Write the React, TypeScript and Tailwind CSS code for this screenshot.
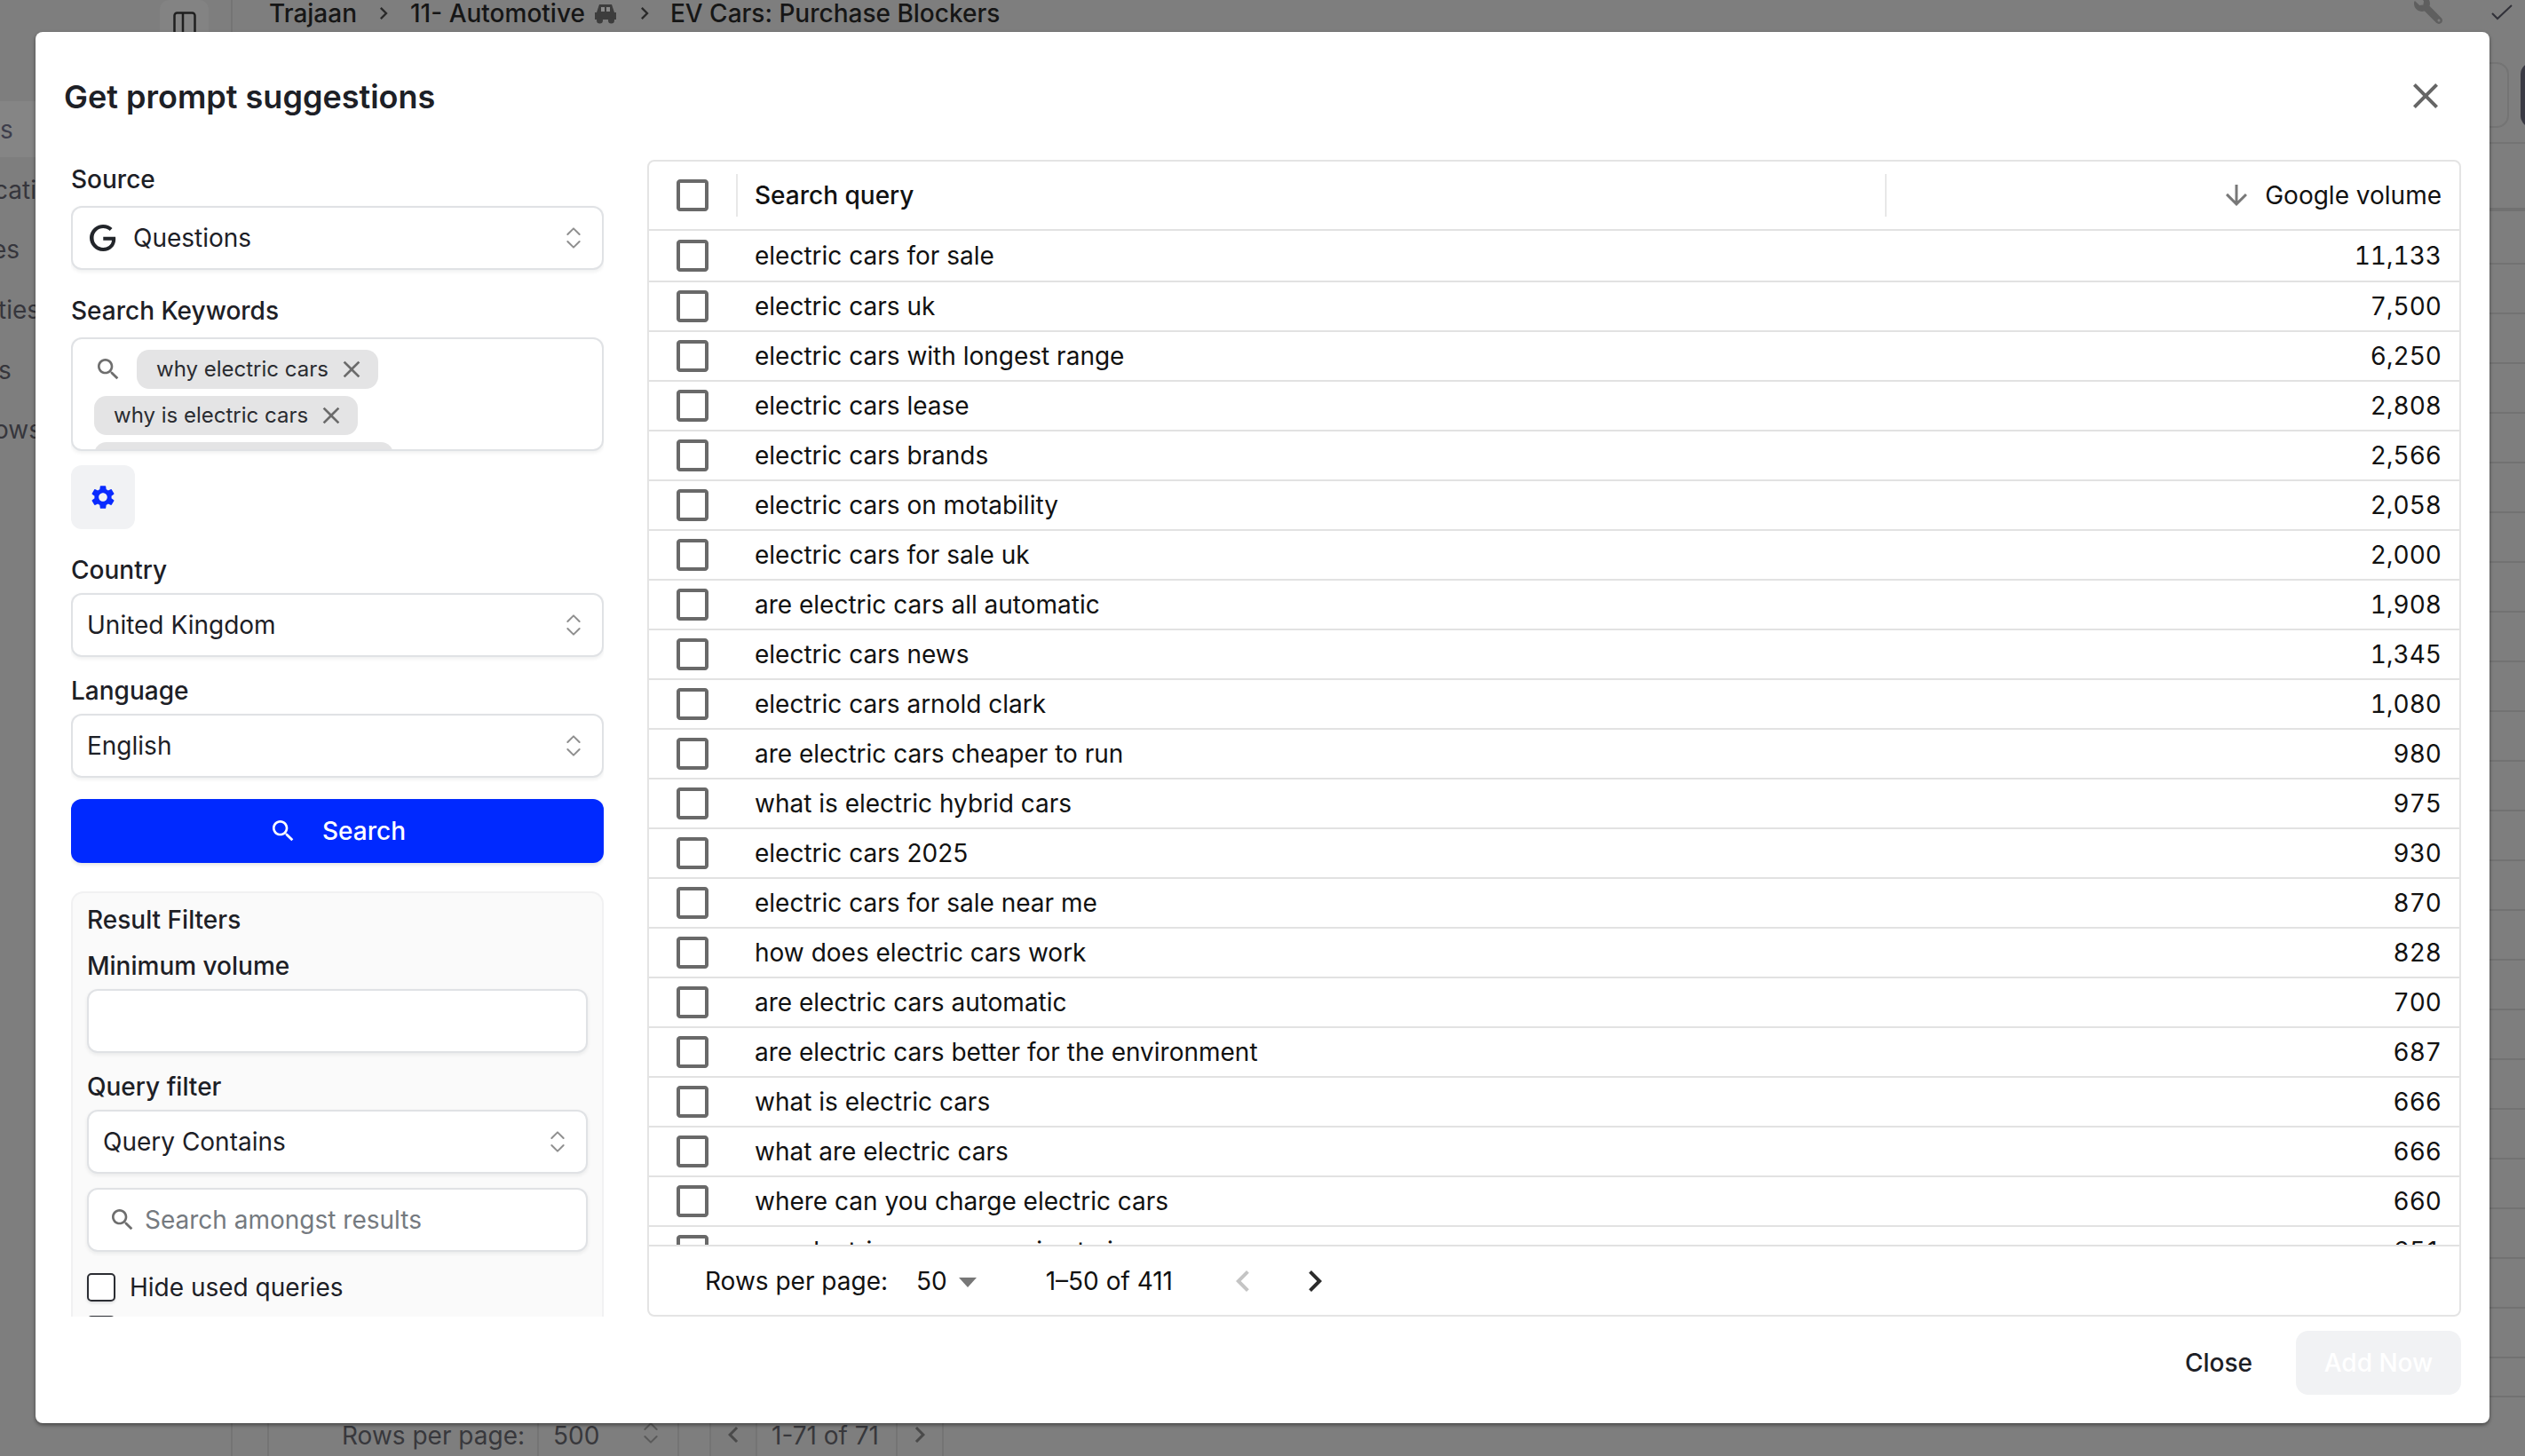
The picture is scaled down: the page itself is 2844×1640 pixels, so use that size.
import React from "react";
import { ChevronsUpDown } from "lucide-react";
import { FaWrench } from "react-icons/fa";

const P = {
  search:
    "M15.5 14h-.79l-.28-.27C15.41 12.59 16 11.11 16 9.5 16 5.91 13.09 3 9.5 3S3 5.91 3 9.5 5.91 16 9.5 16c1.61 0 3.09-.59 4.23-1.57l.27.28v.79l5 4.99L20.49 19l-4.99-5zm-6 0C7.01 14 5 11.99 5 9.5S7.01 5 9.5 5 14 7.01 14 9.5 11.99 14 9.5 14z",
  close:
    "M19 6.41 17.59 5 12 10.59 6.41 5 5 6.41 10.59 12 5 17.59 6.41 19 12 13.41 17.59 19 19 17.59 13.41 12z",
  box: "M19 5v14H5V5h14m0-2H5c-1.1 0-2 .9-2 2v14c0 1.1.9 2 2 2h14c1.1 0 2-.9 2-2V5c0-1.1-.9-2-2-2z",
  down: "M20 12l-1.41-1.41L13 16.17V4h-2v12.17l-5.58-5.59L4 12l8 8 8-8z",
  gear: "M19.14 12.94c.04-.3.06-.61.06-.94 0-.32-.02-.64-.07-.94l2.03-1.58c.18-.14.23-.41.12-.61l-1.92-3.32c-.12-.22-.37-.29-.59-.22l-2.39.96c-.5-.38-1.03-.7-1.62-.94l-.36-2.54c-.04-.24-.24-.41-.48-.41h-3.84c-.24 0-.43.17-.47.41l-.36 2.54c-.59.24-1.13.57-1.62.94l-2.39-.96c-.22-.08-.47 0-.59.22L2.74 8.87c-.12.21-.08.47.12.61l2.03 1.58c-.05.3-.09.63-.09.94s.02.64.07.94l-2.03 1.58c-.18.14-.23.41-.12.61l1.92 3.32c.12.22.37.29.59.22l2.39-.96c.5.38 1.03.7 1.62.94l.36 2.54c.05.24.24.41.48.41h3.84c.24 0 .44-.17.47-.41l.36-2.54c.59-.24 1.13-.56 1.62-.94l2.39.96c.22.08.47 0 .59-.22l1.92-3.32c.12-.22.07-.47-.12-.61l-2.01-1.58zM12 15.6c-1.98 0-3.6-1.62-3.6-3.6s1.62-3.6 3.6-3.6 3.6 1.62 3.6 3.6-1.62 3.6-3.6 3.6z",
  google:
    "M21.35 11.1h-9.17v2.73h6.51c-.33 3.81-3.5 5.44-6.5 5.44C8.36 19.27 5 16.25 5 12c0-4.1 3.2-7.27 7.2-7.27 3.09 0 4.9 1.97 4.9 1.97L19 4.72S16.56 2 12.1 2C6.42 2 2 6.8 2 12c0 5.05 4.13 10 10.22 10 5.35 0 9.25-3.67 9.25-9.09 0-1.15-.12-1.81-.12-1.81z",
  left: "M15.41 7.41 14 6l-6 6 6 6 1.41-1.41L10.83 12z",
  right: "M10 6 8.59 7.41 13.17 12l-4.58 4.59L10 18l6-6z",
};

function Ic({ d, className }: { d: string; className: string }) {
  return (
    <svg viewBox="0 0 24 24" fill="currentColor" className={className}>
      <path d={d} />
    </svg>
  );
}

const rows: [string, string][] = [
  ["electric cars for sale", "11,133"],
  ["electric cars uk", "7,500"],
  ["electric cars with longest range", "6,250"],
  ["electric cars lease", "2,808"],
  ["electric cars brands", "2,566"],
  ["electric cars on motability", "2,058"],
  ["electric cars for sale uk", "2,000"],
  ["are electric cars all automatic", "1,908"],
  ["electric cars news", "1,345"],
  ["electric cars arnold clark", "1,080"],
  ["are electric cars cheaper to run", "980"],
  ["what is electric hybrid cars", "975"],
  ["electric cars 2025", "930"],
  ["electric cars for sale near me", "870"],
  ["how does electric cars work", "828"],
  ["are electric cars automatic", "700"],
  ["are electric cars better for the environment", "687"],
  ["what is electric cars", "666"],
  ["what are electric cars", "666"],
  ["where can you charge electric cars", "660"],
  ["are electric cars expensive to insure", "651"],
];

const fieldCls =
  "flex items-center shrink-0 h-[72px] bg-white border-2 border-[#e0e2e5] rounded-[12px] shadow-[0_2px_4px_rgba(20,25,35,0.07)]";

function Select({ label, icon }: { label: string; icon?: React.ReactNode }) {
  return (
    <div className={`${fieldCls} pl-[16px] pr-[16px]`}>
      {icon}
      <span className="flex-1 text-[28px] text-[#1d2026]">{label}</span>
      <ChevronsUpDown className="w-[32px] h-[32px] text-[#8f8f8f]" strokeWidth={1.5} />
    </div>
  );
}

function Label({ children }: { children: React.ReactNode }) {
  return (
    <div className="h-[44px] shrink-0 flex items-center text-[28px] font-medium text-[#1d2026] mb-[4px]">
      {children}
    </div>
  );
}

function Chip({ text }: { text: string }) {
  return (
    <div className="h-[44px] flex items-center bg-[#e4e4e5] rounded-[14px] pl-[22px] pr-[14px] gap-[10px] text-[24px] text-[#2a2c31] whitespace-nowrap">
      {text}
      <Ic d={P.close} className="w-[32px] h-[32px] text-[#6b6b6b]" />
    </div>
  );
}

function Background() {
  return (
    <div className="flex h-full text-[#36363c]">
      <aside className="w-[262px] shrink-0 border-r-2 border-[#747474] text-[28px] overflow-hidden">
        <div className="h-[114px] flex justify-end pr-[25px]">
          <div className="w-[55px] h-[60px] rounded-[10px] bg-[#838383] flex justify-center pt-[13px]">
            <svg viewBox="0 0 26 36" className="w-[26px] h-[36px]" fill="none" stroke="#1f1f1f" strokeWidth="2.5">
              <rect x="1.5" y="1.5" width="23" height="33" rx="3" />
              <path d="M11 2v32" />
            </svg>
          </div>
        </div>
        <div className="h-[63px] bg-[#858585] flex items-center text-[#3e3e4c]">s</div>
        <div className="h-[67px] flex items-center -ml-[7px] pt-[6px]">cati</div>
        <div className="h-[68px] flex items-center -ml-[9px] pt-[6px]">es</div>
        <div className="h-[68px] flex items-center -ml-[2px] pt-[6px]">ties</div>
        <div className="h-[67px] flex items-center -ml-[2px] pt-[6px]">s</div>
        <div className="h-[68px] flex items-center -ml-[7px] pt-[6px]">ows</div>
      </aside>
      <main className="flex-1 flex flex-col min-w-0 overflow-hidden">
        <div className="h-[70px] shrink-0 flex items-start text-[28px] font-medium text-[#161616] pl-[41px] pr-[14px]">
          <div className="h-[30px] flex items-center whitespace-nowrap">
            Trajaan
            <Ic d={P.right} className="w-[28px] h-[28px] mx-[16px] text-[#2a2a2a]" />
            11- Automotive
            <svg viewBox="0 0 28 24" className="w-[30px] h-[24px] ml-[8px]" fill="#3d3d3d">
              <path d="M7 2h14l3 9h2v8H2v-8h2z" />
              <rect x="9" y="5" width="4" height="5" fill="#8a8a8a" />
              <rect x="15" y="5" width="4" height="5" fill="#8a8a8a" />
              <circle cx="7.5" cy="20" r="3.5" />
              <circle cx="20.5" cy="20" r="3.5" />
            </svg>
            <Ic d={P.right} className="w-[28px] h-[28px] ml-[15px] mr-[15px] text-[#2a2a2a]" />
            EV Cars: Purchase Blockers
          </div>
          <div className="flex-1" />
          <FaWrench className="w-[32px] h-[32px] -mt-[5px] mr-[55px] -scale-x-100 text-[#5f5f5f]" />
          <svg viewBox="0 0 24 18" className="w-[24px] h-[18px] mt-[5px]" fill="none" stroke="#303038" strokeWidth="2">
            <path d="M1 10l6 6L23 1" />
          </svg>
        </div>
        <div className="h-[92px] shrink-0 border-b-2 border-[#747474] flex justify-end gap-[13px]">
          <div className="w-[120px] h-[74px] rounded-[14px] border-2 border-[#747474]" />
          <div className="w-[60px] h-[74px] rounded-[14px] bg-[#3a3a44] -mr-[55px]" />
        </div>
        <div className="h-[76px] shrink-0 border-b-[4px] border-[#717171]" />
        <div className="h-[60px] shrink-0 border-b-2 border-[#727272]" />
        {Array.from({ length: 22 }).map((_, i) => (
          <div key={i} className="h-[56px] shrink-0 border-b-2 border-[#727272]" />
        ))}
        <div className="h-[44px] shrink-0 border-b-2 border-[#727272]" />
        <div className="flex-1 flex items-stretch text-[28px] text-[#38383c]">
          <div className="w-[41px] border-r-2 border-[#747474]" />
          <span className="ml-[82px] w-[220px] pt-[22px]">Rows per page:</span>
          <div className="w-[160px] border-x-2 border-[#747474] flex items-start pt-[22px] pl-[16px]">
            <span className="flex-1">500</span>
            <ChevronsUpDown className="w-[32px] h-[32px] text-[#5a5a5a] mr-[14px] mt-[2px]" strokeWidth={1.5} />
          </div>
          <div className="ml-[34px] w-[54px] border-x-2 border-[#747474] flex justify-center pt-[24px] bg-[#7c7c7c]">
            <Ic d={P.left} className="w-[36px] h-[36px] text-[#4a4a4a]" />
          </div>
          <span className="ml-[16px] w-[140px] pt-[22px]">1-71 of 71</span>
          <div className="w-[54px] border-x-2 border-[#747474] flex justify-center pt-[24px]">
            <Ic d={P.right} className="w-[36px] h-[36px] text-[#4a4a4a]" />
          </div>
        </div>
      </main>
    </div>
  );
}

function Sidebar() {
  return (
    <div className="w-[600px] shrink-0 h-full overflow-hidden flex flex-col">
      <Label>Source</Label>
      <div className="mt-[4px] shrink-0">
        <Select
          label="Questions"
          icon={<Ic d={P.google} className="w-[36px] h-[36px] text-[#22252a] mr-[16px] shrink-0" />}
        />
      </div>
      <div className="mt-[24px]" />
      <Label>Search Keywords</Label>
      <div className="h-[128px] mt-[4px] shrink-0 overflow-hidden bg-white border-2 border-[#e0e2e5] rounded-[12px] shadow-[0_2px_4px_rgba(20,25,35,0.07)] pl-[24px] pr-[10px] pt-[12px]">
        <div className="flex flex-wrap gap-[8px]">
          <div className="h-[44px] flex items-center mr-[8px]">
            <Ic d={P.search} className="w-[32px] h-[32px] text-[#6e6e6e]" />
          </div>
          <Chip text="why electric cars" />
          <Chip text="why is electric cars" />
          <Chip text="why get an electric car" />
        </div>
      </div>
      <div className="mt-[16px] w-[72px] h-[72px] shrink-0 rounded-[12px] bg-[#f1f2f4] flex items-center justify-center">
        <Ic d={P.gear} className="w-[32px] h-[32px] text-[#0a2bff]" />
      </div>
      <div className="mt-[24px]" />
      <Label>Country</Label>
      <Select label="United Kingdom" />
      <div className="mt-[16px]" />
      <Label>Language</Label>
      <Select label="English" />
      <button className="mt-[24px] h-[72px] shrink-0 rounded-[12px] bg-[#0029ff] text-white text-[28px] font-medium flex items-center justify-center gap-[28px] shadow-[0_2px_4px_rgba(20,25,35,0.12)]">
        <Ic d={P.search} className="w-[32px] h-[32px] text-white" />
        Search
      </button>
      <div className="mt-[32px] flex-1 min-h-0 bg-[#fafafa] border-2 border-b-0 border-[#f1f1f2] rounded-t-[14px] px-[16px] pt-[8px]">
        <div className="h-[44px] flex items-center text-[28px] font-medium text-[#1d2026] mb-[8px]">Result Filters</div>
        <Label>Minimum volume</Label>
        <div className={fieldCls} />
        <div className="mt-[16px]" />
        <Label>Query filter</Label>
        <Select label="Query Contains" />
        <div className={`${fieldCls} mt-[16px] pl-[22px] gap-[9px]`}>
          <Ic d={P.search} className="w-[32px] h-[32px] text-[#6e6e6e]" />
          <span className="text-[28px] text-[#757a80]">Search amongst results</span>
        </div>
        <div className="mt-[24px] flex items-center gap-[16px] h-[32px]">
          <div className="w-[32px] h-[32px] rounded-[5px] border-2 border-[#2b2d33] bg-white shadow-[0_2px_3px_rgba(20,25,35,0.12)]" />
          <span className="text-[28px] text-[#1d2026]">Hide used queries</span>
        </div>
        <div className="mt-[16px] w-[32px] h-[32px] rounded-[5px] border-2 border-[#2b2d33] bg-white" />
      </div>
    </div>
  );
}

function Table() {
  return (
    <div className="flex-1 h-full min-w-0 border-2 border-[#e4e4e4] rounded-[8px] flex flex-col overflow-hidden text-[28px] text-[#111111]">
      <div className="h-[78px] shrink-0 border-b-2 border-[#e2e2e2] flex items-center">
        <div className="w-[98px] flex justify-center shrink-0">
          <Ic d={P.box} className="w-[48px] h-[48px] text-[#696969]" />
        </div>
        <div className="w-[2px] h-[48px] bg-[#e8e8e8] shrink-0" />
        <div className="flex-1 pl-[19px] font-medium">Search query</div>
        <div className="w-[2px] h-[48px] bg-[#e8e8e8] shrink-0" />
        <div className="w-[645px] shrink-0 flex items-center justify-end pr-[20px]">
          <Ic d={P.down} className="w-[36px] h-[36px] text-[#787878] mr-[14px]" />
          Google volume
        </div>
      </div>
      <div className="flex-1 min-h-0 overflow-hidden">
        {rows.map(([q, v], i) => (
          <div
            key={q}
            className={`${i === 0 ? "h-[58px]" : "h-[56px]"} shrink-0 flex items-center border-b-2 border-[#e2e2e2]`}
          >
            <div className="w-[98px] flex justify-center shrink-0">
              <Ic d={P.box} className="w-[48px] h-[48px] text-[#696969]" />
            </div>
            <div className="flex-1 pl-[21px]">{q}</div>
            <div className="pr-[20px] tabular-nums">{v}</div>
          </div>
        ))}
      </div>
      <div className="h-[79px] shrink-0 border-t-2 border-[#e2e2e2] flex items-center pl-[63px]">
        <span className="w-[238px]">Rows per page:</span>
        <span>50</span>
        <svg viewBox="0 0 20 11" className="w-[20px] h-[11px] ml-[13px] mt-[4px]" fill="#777777">
          <path d="M0 0h20L10 11z" />
        </svg>
        <span className="ml-[78px] w-[192px]">1–50 of 411</span>
        <Ic d={P.left} className="w-[48px] h-[48px] text-[#c4c4c4] ml-[6px]" />
        <Ic d={P.right} className="w-[48px] h-[48px] text-[#2c2c2c] ml-[33px]" />
      </div>
    </div>
  );
}

export default function App() {
  return (
    <div className="relative w-[2844px] h-[1640px] overflow-hidden bg-[#7e7e7e] [font-family:Inter,sans-serif]">
      <Background />
      <div className="absolute left-[40px] top-[36px] w-[2764px] h-[1567px] bg-white rounded-[8px] shadow-[0_2px_4px_rgba(0,0,0,0.45)] flex flex-col">
        <div className="h-[144px] shrink-0 flex items-start justify-between pl-[32px] pr-[48px]">
          <div className="text-[36px] leading-[46px] font-semibold text-[#1d2026] mt-[50px]">Get prompt suggestions</div>
          <Ic d={P.close} className="w-[48px] h-[48px] text-[#666666] mt-[48px]" />
        </div>
        <div className="h-[1303px] shrink-0 flex pl-[40px] pr-[32px] gap-[49px]">
          <Sidebar />
          <Table />
        </div>
        <div className="flex-1 flex items-start justify-end pr-[32px] pt-[16px]">
          <div className="h-[72px] flex items-center text-[28px] font-medium text-[#1d2026] mr-[49px]">Close</div>
          <div className="h-[72px] w-[186px] justify-center rounded-[14px] bg-[#f1f2f4] flex items-center text-[28px] font-medium text-white">
            Add Now
          </div>
        </div>
      </div>
    </div>
  );
}
